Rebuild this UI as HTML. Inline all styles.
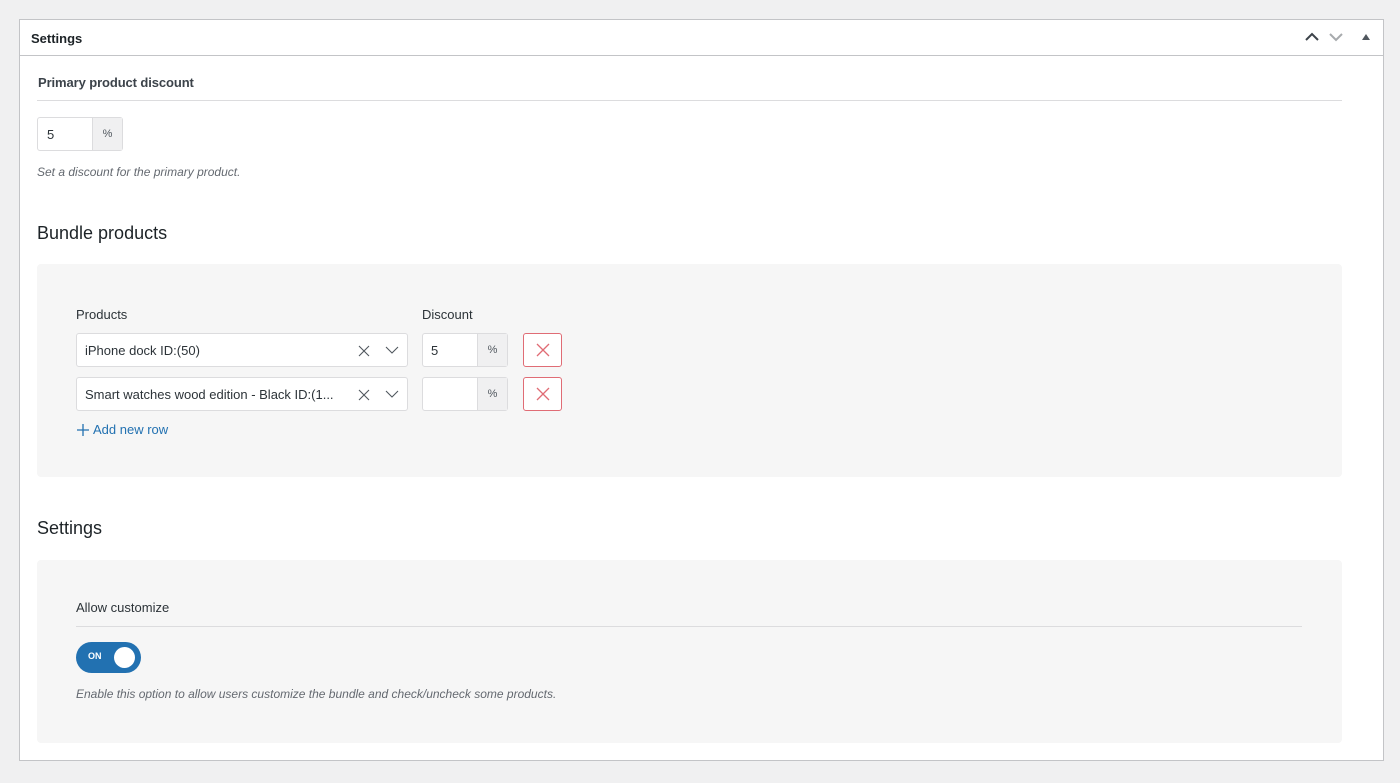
<!DOCTYPE html>
<html><head><meta charset="utf-8"><style>
*{box-sizing:border-box;margin:0;padding:0}
body{width:1400px;height:783px;background:#f0f0f1;font-family:"Liberation Sans",sans-serif;color:#1d2327;position:relative;overflow:hidden}
.panel{position:absolute;left:19px;top:19px;width:1365px;height:742px;background:#fff;border:1px solid #c3c4c7}
.hdr{height:36px;border-bottom:1px solid #c3c4c7;position:relative}
.hdr .t{position:absolute;left:11px;top:11px;font-size:13px;font-weight:bold;color:#1d2327}
.abs{position:absolute}
.lbl{font-size:13px;color:#2c3338}
.hr{height:1px;background:#dcdcde}
.inp{position:absolute;height:34px;border:1px solid #dcdcde;border-radius:3px;background:#fff;font-size:13px;color:#2c3338}
.pct{position:absolute;right:0;top:0;bottom:0;width:30px;background:#f0f0f1;border-left:1px solid #dcdcde;font-size:11px;text-align:center;line-height:32px;color:#50575e}
.desc{font-size:12px;font-style:italic;color:#646970}
.h2{font-size:18px;color:#1d2327}
.box{position:absolute;background:#f6f6f6;border-radius:4px}
.del{position:absolute;width:39px;height:34px;border:1px solid #e06c75;border-radius:3px;background:#fff}
</style></head><body>
<div class="panel">
 <div class="hdr"><span class="t">Settings</span>
  <svg class="abs" style="left:1284px;top:12px" width="16" height="10"><path d="M2 8 L8 2 L14 8" stroke="#3c434a" stroke-width="2" fill="none"/></svg>
  <svg class="abs" style="left:1308px;top:12px" width="16" height="10"><path d="M2 2 L8 8 L14 2" stroke="#a7aaad" stroke-width="2" fill="none"/></svg>
  <svg class="abs" style="left:1341px;top:13px" width="10" height="8"><path d="M1 7 L5 1 L9 7Z" fill="#50575e"/></svg>
 </div>
 <div class="abs lbl" style="left:18px;top:55px;font-weight:bold;color:#3c434a;letter-spacing:-0.1px">Primary product discount</div>
 <div class="abs hr" style="left:17px;top:80px;width:1305px"></div>
 <div class="inp" style="left:17px;top:97px;width:86px"><span class="abs" style="left:9px;top:9px">5</span><div class="pct">%</div></div>
 <div class="abs desc" style="left:17px;top:145px">Set a discount for the primary product.</div>
 <div class="abs h2" style="left:17px;top:203px">Bundle products</div>
 <div class="box" style="left:17px;top:244px;width:1305px;height:213px">
  <div class="abs lbl" style="left:39px;top:43px">Products</div>
  <div class="abs lbl" style="left:385px;top:43px">Discount</div>
  <div class="inp" style="left:39px;top:69px;width:332px"><span class="abs" style="left:8px;top:9px">iPhone dock ID:(50)</span>
   <svg class="abs" style="left:280px;top:10px" width="14" height="14"><path d="M2 2L12 12M12 2L2 12" stroke="#50575e" stroke-width="1.1"/></svg>
   <svg class="abs" style="left:308px;top:12px" width="14" height="9"><path d="M1 1L7 7L13 1" stroke="#50575e" stroke-width="1.1" fill="none"/></svg></div>
  <div class="inp" style="left:385px;top:69px;width:86px"><span class="abs" style="left:8px;top:9px">5</span><div class="pct">%</div></div>
  <div class="del" style="left:486px;top:69px"><svg class="abs" style="left:12px;top:9px" width="14" height="14"><path d="M1 1L13 13M13 1L1 13" stroke="#e06c75" stroke-width="1.3"/></svg></div>
  <div class="inp" style="left:39px;top:113px;width:332px"><span class="abs" style="left:8px;top:9px">Smart watches wood edition - Black ID:(1...</span>
   <svg class="abs" style="left:280px;top:10px" width="14" height="14"><path d="M2 2L12 12M12 2L2 12" stroke="#50575e" stroke-width="1.1"/></svg>
   <svg class="abs" style="left:308px;top:12px" width="14" height="9"><path d="M1 1L7 7L13 1" stroke="#50575e" stroke-width="1.1" fill="none"/></svg></div>
  <div class="inp" style="left:385px;top:113px;width:86px"><div class="pct">%</div></div>
  <div class="del" style="left:486px;top:113px"><svg class="abs" style="left:12px;top:9px" width="14" height="14"><path d="M1 1L13 13M13 1L1 13" stroke="#e06c75" stroke-width="1.3"/></svg></div>
  <svg class="abs" style="left:39px;top:159px" width="14" height="14"><path d="M7 1V13M1 7H13" stroke="#2271b1" stroke-width="1.3"/></svg>
  <div class="abs" style="left:56px;top:158px;font-size:13px;color:#2271b1">Add new row</div>
 </div>
 <div class="abs h2" style="left:17px;top:498px">Settings</div>
 <div class="box" style="left:17px;top:540px;width:1305px;height:183px">
  <div class="abs" style="left:39px;top:40px;font-size:13px;color:#2c3338">Allow customize</div>
  <div class="abs hr" style="left:39px;top:66px;width:1226px"></div>
  <div class="abs" style="left:39px;top:82px;width:65px;height:31px;border-radius:16px;background:#2271b1">
   <span class="abs" style="left:12px;top:9px;font-size:9px;font-weight:bold;color:#fff">ON</span>
   <div class="abs" style="left:38px;top:5px;width:21px;height:21px;border-radius:50%;background:#fff"></div></div>
  <div class="abs desc" style="left:39px;top:127px">Enable this option to allow users customize the bundle and check/uncheck some products.</div>
 </div>
</div>
</body></html>
